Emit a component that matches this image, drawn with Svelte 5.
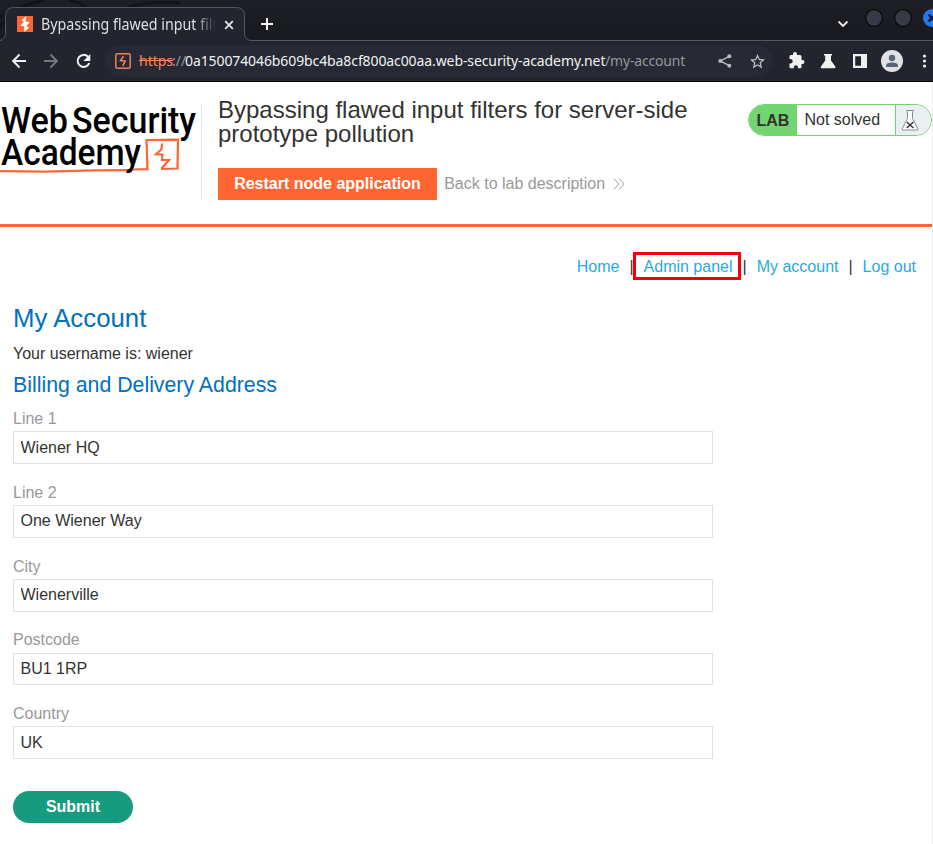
<script>
  const fields = [
    { label: 'Line 1', value: 'Wiener HQ' },
    { label: 'Line 2', value: 'One Wiener Way' },
    { label: 'City', value: 'Wienerville' },
    { label: 'Postcode', value: 'BU1 1RP' },
    { label: 'Country', value: 'UK' }
  ];
</script>

<div class="window">
  <div class="tabstrip">
    <svg class="swirl" width="270" height="40" viewBox="0 0 270 40" fill="none" stroke="#131418" stroke-width="3">
      <path d="M0 18C10 7 30 5 43 0M70 0Q80 2 86 8M128 7Q150 1 180 3M0 29Q3 22 5 20" />
    </svg>
    <svg class="tabshape" width="252" height="34" viewBox="0 0 252 34">
      <path d="M0 34C3.5 33 5.5 30.5 5.5 26V8.5Q5.5 .5 13.500 .5H236.500Q244.500 .5 244.500 8.500V26Q244.500 33 252 33.500V34Z" fill="#22252e" />
      <path d="M0 33.500Q5.500 32 5.500 26V8.500Q5.500 .5 13.500 .5H236.500Q244.500 .5 244.500 8.500V26Q244.500 33.500 252 33.500" fill="none" stroke="#55575c" />
    </svg>
    <div class="tab">
      <svg class="fav" width="16" height="16" viewBox="0 0 16 16"><path fill="#ff6633" d="M0 0h16v16H0z" /><path fill="#fff" d="M9.300 0L8.600 5.400 12.800 6 9.300 10.200 12.200 11.600 7 16 7.500 10.600 3.300 9.800 7 5.400 4.300 4.600z" /></svg>
      <span class="tabtitle">Bypassing flawed input filt</span>
      <svg class="close" width="10" height="10" viewBox="0 0 10 10" stroke="#e3e4e5" stroke-width="1.800"><path d="M1.200 1.200l7.600 7.600M8.800 1.200L1.200 8.800" /></svg>
    </div>
    <svg class="plus" width="12" height="12" viewBox="0 0 12 12" stroke="#f2f2f2" stroke-width="2"><path d="M6 0v12M0 6h12" /></svg>
    <svg class="controls" width="97" height="30" viewBox="0 0 97 30">
      <path d="M2.500 21.500l4.500 4.500 4.500-4.500" fill="none" stroke="#eee" stroke-width="1.800" />
      <g fill="#353a46" stroke="#08090c" stroke-width="1.300"><circle cx="38" cy="18" r="8.400" /><circle cx="67" cy="18" r="8.400" /></g>
      <circle cx="96" cy="18" r="9" fill="#2477f4" />
      <path d="M92.500 14.500l7 7M99.500 14.500l-7 7" stroke="#0b1730" stroke-width="2.400" />
    </svg>
  </div>

  <div class="toolbar">
    <svg class="navicons" width="82" height="20" viewBox="0 0 82 20" fill="none" stroke="#f1f1f1" stroke-width="2">
      <path d="M14 10H1.500M7.500 3.500L1.200 10l6.300 6.500" />
      <path stroke="#74777c" d="M32 10h12.500M38.500 3.500l6.300 6.500-6.300 6.500" />
      <path d="M76 5.700A6 6 0 1 0 77.300 12" /><path fill="#f1f1f1" stroke="none" d="M78.300 3v7h-7z" />
    </svg>
    <div class="omnibox">
      <svg class="site" width="16" height="16" viewBox="0 0 16 16"><rect x=".8" y=".8" width="14.400" height="14.400" rx="1.500" fill="none" stroke="#e8835d" stroke-width="1.500" /><path fill="none" stroke="#ef8660" stroke-width="1.500" d="M8.500 3L5.500 7.600l4.700.5L7.700 12.800" /></svg>
      <div class="url"><span class="https">https</span><span class="dim">://</span><span class="host">0a150074046b609bc4ba8cf800ac00aa.web-security-academy.net</span><span class="dim path">/my-account</span></div>
      <svg class="share" width="14" height="14" viewBox="0 0 14 14" fill="#b9bab9"><path d="M11.500 2.300L2 7l9.500 4.700" fill="none" stroke="#b9bab9" stroke-width="1.400" /><circle cx="11.300" cy="2.300" r="2" /><circle cx="2.300" cy="7" r="2" /><circle cx="11.300" cy="11.700" r="2" /></svg>
      <svg class="star" width="15" height="15" viewBox="0 0 24 24" fill="#c3c4c3"><path d="M24 8.700l-8.600-.75L12 0 8.600 7.950 0 8.700l6.500 5.700L4.600 23 12 18.400 19.400 23l-1.950-8.600zM12 16.200l-4.500 2.700 1.200-5.200-4-3.500 5.300-.45L12 4.900l2 4.850 5.300.45-4 3.500 1.200 5.200z" /></svg>
    </div>
    <svg class="exts" width="144" height="24" viewBox="0 0 144 24" fill="#f0f0ee">
      <path d="M13.500 11h-1V7.600q0-1.500-1.500-1.500H8V5a2 2 0 0 0-4 0v1.100H1.800Q.5 6.100.5 7.600V10h1a2.200 2.200 0 0 1 0 4.400h-1V18q0 1.300 1.300 1.300h3v-1a2.100 2.100 0 0 1 4.200 0v1h2q1.500 0 1.500-1.300v-3h1a2 2 0 0 0 0-4z" />
      <path d="M35 5h8v1.500h-1v5l4.300 6q.8 1.800-1 1.800H33q-2-.1-1-1.800l4.200-6v-5H35z" />
      <path fill-rule="evenodd" d="M64 5h14v14H64zM66.200 7.200v9.600h5.800V7.200z" />
      <circle cx="103" cy="12" r="11" fill="#dfe1e5" /><circle cx="103" cy="9" r="3.200" fill="#5b6474" /><path fill="#5b6474" d="M97 18v-1.600Q97.400 13.600 103 13.600T109 16.400V18z" />
      <circle cx="135.500" cy="7" r="1.600" /><circle cx="135.500" cy="12" r="1.600" /><circle cx="135.500" cy="17" r="1.600" />
    </svg>
  </div>

  <main>
    <header>
      <svg class="logo" width="201" height="80" viewBox="0 0 201 80">
        <g class="logotext">
          <text x="1" y="28.500" textLength="67" lengthAdjust="spacingAndGlyphs">Web</text>
          <text x="72" y="28.500" textLength="124" lengthAdjust="spacingAndGlyphs">Security</text>
          <text x="1" y="61.200" textLength="140" lengthAdjust="spacingAndGlyphs">Academy</text>
        </g>
        <g fill="none" stroke="#ff6633" stroke-width="2.200">
          <path d="M0 67.200L45 67.700 95 66.300 127 66.200M133 65.500L147.500 65.200 146.500 36 178 35.700 177.500 64.500 161 65" />
          <path d="M162.300 39.500L161.300 45.500 156 50.300 162.500 50.500 162 56 169 56 161.500 64.500" />
        </g>
      </svg>
      <div class="headmain">
        <h2>Bypassing flawed input filters for server-side prototype pollution</h2>
        <div class="actions">
          <button class="restart">Restart node application</button>
          <a class="back" href="#lab">Back to lab description
            <svg width="12" height="12" viewBox="0 0 12 12" fill="none" stroke="#a0a0a0"><path d="M.8.5l5 5.500-5 5.500M6.200.5l5 5.500-5 5.500" /></svg></a>
        </div>
      </div>
      <div class="status">
        <b>LAB</b><span>Not solved</span>
        <i><svg width="18" height="21" viewBox="0 0 18 21" fill="#fff" stroke="#858b8b"><path d="M6.500 1.500v7L1.300 18.500v1.500h15.400v-1.500L11.500 8.500v-7" /><path d="M5 .5h8" /><path d="M5.800 12l6.500 6M12.300 12l-6.500 6" stroke="#333" stroke-width="1.500" /></svg></i>
      </div>
    </header>

    <nav>
      <a href="#home">Home</a><span class="bar">|</span>
      <a class="admin" href="#admin">Admin panel</a><span class="bar">|</span>
      <a href="#account">My account</a><span class="bar">|</span>
      <a href="#logout">Log out</a>
    </nav>

    <section>
      <h1>My Account</h1>
      <p>Your username is: wiener</p>
      <h3>Billing and Delivery Address</h3>
      {#each fields as field}
        <label>{field.label}<input value={field.value} /></label>
      {/each}
      <button class="submit">Submit</button>
    </section>
  </main>
</div>

<style>
  :global(body) { margin: 0; overflow: hidden; }
  * { box-sizing: border-box; }
  svg { display: block; flex: none; }
  .window { width: 933px; height: 844px; overflow: hidden; display: flex; flex-direction: column; font: 16px/20px "Liberation Sans", Arial, sans-serif; color: #333332; background: #fff; }
  .tabstrip { height: 41px; flex: none; position: relative; display: flex; background: linear-gradient(#1d1f26, #191a1f 35px); border-bottom: 1px solid #55575c; }
  .swirl { position: absolute; left: 0; top: 0; }
  .tabshape { position: absolute; left: 0; top: 7px; }
  .tab { position: relative; width: 245px; padding: 7px 0 0 17px; display: flex; align-items: center; height: 41px; }
  .tabtitle { margin-left: 8px; width: 190px; margin-right: -14px; white-space: nowrap; font: 15.500px/22px "Noto Sans", sans-serif; letter-spacing: 0; transform: scaleX(.92); transform-origin: 0 50%; color: #dedfe0; -webkit-mask-image: linear-gradient(90deg, #000 166px, transparent 190px); mask-image: linear-gradient(90deg, #000 166px, transparent 190px); }
  .close { margin-left: 7px; margin-top: 1px; }
  .plus { margin: 18px 0 0 16px; }
  .controls { margin-left: auto; }
  .toolbar { height: 41px; flex: none; display: flex; align-items: center; background: #22252e; border-bottom: 1px solid #050608; }
  .navicons { margin-left: 12px; }
  .omnibox { margin-left: 11px; width: 670px; height: 32px; border-radius: 16px; background: #272a34; display: flex; align-items: center; padding-left: 10px; }
  .url { width: 548px; margin-left: 8px; display: flex; font: 14px/20px "Noto Sans", sans-serif; color: #f1f1f1; white-space: nowrap; }
  .https { color: #ef8660; text-decoration: line-through; width: 33px; }
  .dim { color: #95979b; }
  .https + .dim { width: 13px; }
  .host { width: 420px; letter-spacing: -.1px; }
  .path { letter-spacing: -.18px; }
  .share { margin-left: 31px; }
  .star { margin-left: 18px; }
  .exts { margin-left: 16px; }
  main { flex: 1; width: 933px; border-right: 1px solid #eee; }
  header { height: 145px; display: flex; border-bottom: 3px solid #ff6633; padding-top: 22px; }
  .logo { overflow: visible; }
  .logotext { font: 500 37px Roboto, sans-serif; fill: #000; }
  .headmain { width: 547px; height: 96px; border-left: 1px solid #e2e2e2; padding-left: 16px; }
  h2 { margin: -6px 0 0; font-weight: 400; font-size: 24px; line-height: 24px; width: 480px; }
  .actions { display: flex; align-items: center; margin-top: 22px; }
  button { border: 0; padding: 0; font: bold 16px/20px "Liberation Sans", Arial, sans-serif; color: #fff; }
  .restart { width: 219px; height: 32px; background: #ff6633; }
  .back { margin-left: 7.200px; display: flex; align-items: center; color: #999; gap: 8.300px; }
  a { text-decoration: none; color: #29aae3; }
  .status { width: 184px; height: 32px; border: 1px solid #72d572; border-radius: 16px; overflow: hidden; display: flex; line-height: 30px; }
  .status b { width: 48px; background: #72d572; padding-left: 7.400px; line-height: 31px; }
  .status span { width: 99px; padding-left: 7.500px; border-right: 1px solid #72d572; }
  .status i { flex: 1; background: #eaeff2; padding: 5px 0 0 5px; }
  nav { height: 32px; margin-top: 24px; padding-right: 16px; display: flex; justify-content: flex-end; align-items: center; }
  .bar { width: 24.150px; padding-left: 10px; }
  .admin { position: relative; }
  .admin::after { content: ''; box-sizing: border-box; position: absolute; left: -10.500px; top: -5px; width: 108px; height: 28px; border: 3px solid #f50009; }
  section { padding: 22px 13px; }
  h1, h3 { font-weight: 400; color: #0071bc; }
  h1 { margin: 0; font-size: 25.800px; line-height: 26px; }
  p { margin: 13px 0 0; }
  h3 { margin: 9px 0 12px; font-size: 21.300px; line-height: 24px; }
  label { display: block; height: 73.800px; color: #999; line-height: 20px; }
  input { display: block; width: 700px; height: 32.700px; margin-top: 2.300px; border: 1px solid #e2e2e2; padding: 0 6.500px; font: 16px "Liberation Sans", Arial, sans-serif; color: #333332; background: #fff; outline: 0; border-radius: 0; }
  .submit { width: 120px; height: 32px; border-radius: 16px; background: #179b7e; margin-top: 13px; }
</style>
